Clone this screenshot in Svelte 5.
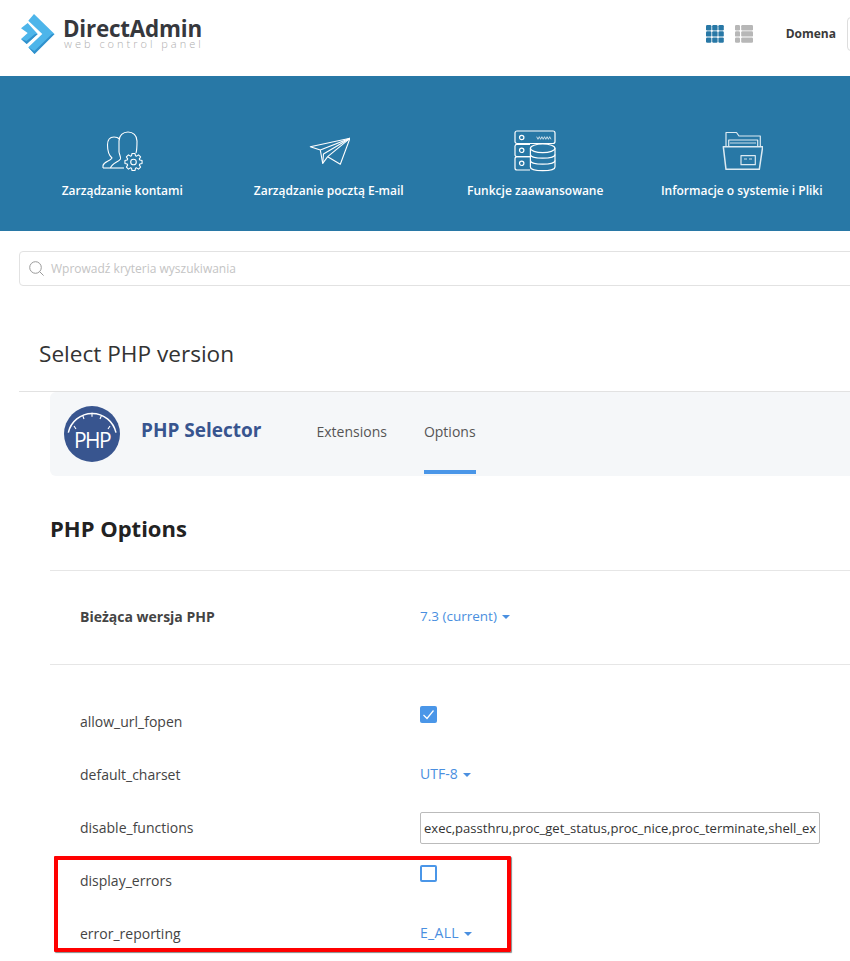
<script>
  let tiles = ["Zarządzanie kontami", "Zarządzanie pocztą E-mail", "Funkcje zaawansowane", "Informacje o systemie i Pliki"];
  let dots = [0, 1, 2];

  // 8 tooth gear outline for the accounts icon
  const gear = (cx, cy, outer, inner) => {
    let pts = [];
    for (let i = 0; i < 8; i++) {
      let a = (i * Math.PI) / 4;
      [[-0.3, inner], [-0.17, outer], [0.17, outer], [0.3, inner]].forEach(([d, r]) => {
        pts.push((cx + r * Math.cos(a + d)).toFixed(2) + " " + (cy + r * Math.sin(a + d)).toFixed(2));
      });
    }
    return "M" + pts.join(" L") + " Z";
  };
</script>

<div class="page">
  <header class="top">
    <div class="logo">
      <svg width="36" height="42" viewBox="0 0 36 42">
        <polygon points="15,1 35.500,21 15.500,41 9.300,34.300 23.300,21 9.300,7.700" fill="#4db5ea" />
        <polygon points="9.300,34.300 15.500,41 35.500,21 33,21 15.300,38" fill="#3291cc" />
        <polygon points="8.700,10 18.700,21 7.700,31 2,26 8.700,20 2,15.300" fill="#4db5ea" />
        <polygon points="2,26 7.700,31 18.700,21 16,21 7.500,28" fill="#3291cc" />
      </svg>
      <div class="logo-text">
        <div class="logo-name">DirectAdmin</div>
        <div class="logo-sub">web control panel</div>
      </div>
    </div>
    <div class="views">
      <svg width="18" height="18" viewBox="0 0 18 18" fill="#2878a6">
        {#each dots as y}
          {#each dots as x}
            <rect x={x * 6.2} y={y * 6.2} width="5.4" height="5.4" rx="1.2" />
          {/each}
        {/each}
      </svg>
      <svg width="18" height="18" viewBox="0 0 18 18" fill="#b7b7b7">
        {#each dots as y}
          <rect x="0" y={y * 6.2} width="5" height="5.4" rx="1.2" />
          <rect x="6.2" y={y * 6.2} width="11.8" height="5.4" rx="1.2" />
        {/each}
      </svg>
    </div>
    <span class="domain-label">Domena</span>
    <div class="domain-box"></div>
  </header>

  <nav class="band">
    {#each tiles as tile, i}
      <div class="tile">
        <div class="tile-icon">
          {#if i === 0}
            <svg width="42" height="42" viewBox="0 0 42 42" fill="none" stroke="#fff" stroke-width="1.100" stroke-linejoin="round">
              <path d="M2 38 V35.500 C3 31.500 9 31.500 11 28 C8 25.500 6.500 22 6.500 15 C6.500 10 9 7 13 7 C15 7 17 7.500 18.500 9" />
              <path d="M2 38 H23" />
              <path d="M9.500 38 C11 33 17 32.500 19.500 29 C20 27 18.500 25 18 22 V11 C18 5.500 22 2 27 2 C32 2 36 5.500 36 11 C36 15 36 20 35 23" />
              <path d={gear(32.500, 32, 8.700, 6.600)} />
              <circle cx="32.500" cy="32" r="2.800" />
            </svg>
          {:else if i === 1}
            <svg width="42" height="42" viewBox="0 0 42 42" fill="none" stroke="#fff" stroke-width="1.100" stroke-linejoin="round">
              <path d="M2.300 16.700 L42 8.300 L32.300 34.300 L19.700 26.700 L14.700 33.300 L12.300 20 Z" />
              <path d="M12.300 20 L42 8.300 L19.700 26.700" />
              <path d="M14.700 33.300 L15.500 24 L42 8.300" />
            </svg>
          {:else if i === 2}
            <svg width="42" height="42" viewBox="0 0 42 42" fill="none" stroke="#fff" stroke-width="1.200">
              <rect x="1" y="1" width="40" height="12.500" rx="2" />
              <path d="M16 26.700 H3 A2 2 0 0 1 1 24.700 V16 A2 2 0 0 1 3 14.300 H16" />
              <path d="M16 26.700 H3 A2 2 0 0 0 1 28.700 V38 A2 2 0 0 0 3 40 H16" />
              <circle cx="7.700" cy="7.500" r="2.200" />
              <circle cx="7.700" cy="20.300" r="2.200" />
              <circle cx="7.700" cy="33.300" r="2.200" />
              <path d="M22.700 6.700 L24 9.300 L25.300 6.700 L26.600 9.300 L27.900 6.700 L29.200 9.300 L30.500 6.700 L31.800 9.300 L33.100 6.700 L34.400 9.300 L35.700 6.700 L37 9.300" stroke-width="0.700" />
              <ellipse cx="28.700" cy="18.300" rx="12.300" ry="4.300" fill="#2878a6" />
              <path d="M16.400 18.300 V37 C16.400 39.300 22 40.700 28.700 40.700 C35.400 40.700 41 39.300 41 37 V18.300" />
              <path d="M16.400 24.500 C16.400 26.800 22 28.200 28.700 28.200 C35.400 28.200 41 26.800 41 24.500" />
              <path d="M16.400 30.500 C16.400 32.800 22 34.200 28.700 34.200 C35.400 34.200 41 32.800 41 30.500" />
            </svg>
          {:else}
            <svg width="42" height="42" viewBox="0 0 42 42" fill="none" stroke="#dceaf2" stroke-width="1.200" stroke-linejoin="round">
              <path d="M5 16 V2.500 H15.500 L18 6 H39.300 V16" />
              <path d="M7.700 16 V10 H36.700 V16" />
              <path d="M9 13 H35" stroke-width="0.900" />
              <path d="M2.300 16.700 H41.700 L38.300 39.300 H5 Z" stroke-width="1.500" />
              <rect x="20" y="25.700" width="14.300" height="9" />
              <path d="M23 29 H26 M28 29 H31" stroke-width="0.900" />
            </svg>
          {/if}
        </div>
        <div class="tile-label">{tile}</div>
      </div>
    {/each}
  </nav>

  <div class="search">
    <svg width="15" height="15" viewBox="0 0 15 15" fill="none" stroke="#9a9a9a" stroke-width="1">
      <circle cx="6.500" cy="6.500" r="5.800" />
      <path d="M10.600 10.600 L14.600 14.600" />
    </svg>
    <span>Wprowadź kryteria wyszukiwania</span>
  </div>

  <h1 class="page-title">Select PHP version</h1>

  <div class="content">
    <div class="plugin-bar">
      <svg class="php-logo" width="56" height="56" viewBox="0 0 56 56">
        <circle cx="28" cy="28" r="28" fill="#38558f" />
        <path d="M4.300 26.700 A24.400 24.400 0 0 1 52 26.700" fill="none" stroke="#fff" stroke-width="1.500" />
        <path d="M10 20 L12 23 M18.700 9.500 L20 13 M28 6.700 V10.700 M37.500 9.500 L36 13 M46 20 L44 23" stroke="#fff" stroke-width="1.100" />
        <text x="28" y="42" text-anchor="middle" class="php-text">PHP</text>
      </svg>
      <div class="plugin-name">PHP Selector</div>
      <div class="tabs">
        <div class="tab">Extensions</div>
        <div class="tab active">Options</div>
      </div>
    </div>

    <h2 class="section">PHP Options</h2>

    <div class="row version">
      <div class="label"><b>Bieżąca wersja PHP</b></div>
      <div class="drop narrow">7.3 (current)<i class="caret"></i></div>
    </div>

    <div class="rows">
      <div class="row">
        <div class="label">allow_url_fopen</div>
        <div class="check on">
          <svg width="17" height="17" viewBox="0 0 17 17" fill="none" stroke="#fff" stroke-width="1.200">
            <path d="M3.500 9 L7 12.500 L13.500 4.500" />
          </svg>
        </div>
      </div>
      <div class="row">
        <div class="label">default_charset</div>
        <div class="drop">UTF-8<i class="caret"></i></div>
      </div>
      <div class="row">
        <div class="label">disable_functions</div>
        <div class="text-input">exec,passthru,proc_get_status,proc_nice,proc_terminate,shell_ex</div>
      </div>
      <div class="row">
        <div class="label">display_errors</div>
        <div class="check"></div>
      </div>
      <div class="row">
        <div class="label">error_reporting</div>
        <div class="drop wide">E_ALL<i class="caret"></i></div>
      </div>
    </div>
    <div class="highlight"></div>
  </div>
</div>

<style>
  :global(body) {
    margin: 0;
    background: #fff;
  }
  .page {
    width: 850px;
    height: 961px;
    overflow: hidden;
    font-family: "Open Sans", "Noto Sans", sans-serif;
    color: #3a3a3a;
  }
  .top {
    display: flex;
    align-items: center;
    height: 76px;
    padding-left: 19px;
    box-sizing: border-box;
  }
  .logo {
    display: flex;
    align-items: center;
    gap: 8px;
    margin-right: auto;
    margin-top: -9px;
  }
  .logo-name {
    font-size: 22.4px;
    line-height: 18px;
    font-weight: 700;
    color: #36383d;
    letter-spacing: -0.2px;
  }
  .logo-sub {
    font-size: 11px;
    line-height: 9px;
    color: #aeaeae;
    letter-spacing: 3px;
    margin-top: 1px;
    padding-left: 1px;
    font-weight: 300;
  }
  .views {
    display: flex;
    gap: 11px;
    margin-right: 33px;
    margin-top: -9px;
  }
  .domain-label {
    font-size: 12px;
    font-weight: 700;
    color: #3a3a3a;
    margin-right: 11px;
    margin-top: -9px;
  }
  .domain-box {
    width: 40px;
    height: 34px;
    margin-right: -37px;
    margin-top: -9px;
    border: 1px solid #ddd;
    border-radius: 4px;
    flex: none;
    box-sizing: border-box;
  }
  .band {
    display: grid;
    grid-template-columns: repeat(4, 206.5px);
    height: 155px;
    background: #2878a6;
    padding-left: 19px;
    box-sizing: border-box;
    color: #fff;
    text-align: center;
  }
  .tile-icon {
    height: 42px;
    margin-top: 54px;
  }
  .tile-label {
    margin-top: 10px;
    font-size: 12px;
    font-weight: 600;
    line-height: 18px;
    white-space: nowrap;
  }
  .search {
    display: flex;
    align-items: center;
    gap: 7px;
    width: 900px;
    height: 35px;
    margin: 20px 0 0 19px;
    padding-left: 9px;
    box-sizing: border-box;
    border: 1px solid #e2e2e2;
    border-radius: 4px;
    font-size: 12px;
    color: #c4c4c4;
  }
  .page-title {
    margin: 0 0 0 19px;
    padding: 50px 0 20px 20px;
    font-size: 22.6px;
    font-weight: 400;
    line-height: 35px;
    color: #333;
    border-bottom: 1px solid #e2e2e2;
    width: 900px;
  }
  .content {
    position: relative;
    padding-left: 50px;
  }
  .plugin-bar {
    display: flex;
    align-items: center;
    width: 900px;
    height: 84px;
    background: #f5f7f9;
    border-radius: 6px;
    padding-left: 14px;
    box-sizing: border-box;
  }
  .php-text {
    font-size: 21px;
    fill: #fff;
    font-family: "Open Sans", sans-serif;
    letter-spacing: -1.5px;
  }
  .plugin-name {
    margin-left: 21px;
    margin-bottom: 8px;
    font-size: 19px;
    font-weight: 700;
    color: #38558f;
  }
  .tabs {
    display: flex;
    align-self: flex-start;
    gap: 37px;
    margin-left: 55px;
  }
  .tab {
    display: flex;
    align-items: center;
    height: 82px;
    box-sizing: border-box;
    border-bottom: 4px solid transparent;
    font-size: 14px;
    color: #555;
  }
  .tab.active {
    border-bottom-color: #4a96e8;
  }
  .section {
    margin: 0;
    padding: 37px 0 27px;
    font-size: 22px;
    line-height: 30px;
    font-weight: 700;
    color: #222;
    border-bottom: 1px solid #e6e6e6;
    width: 900px;
  }
  .row {
    display: flex;
    align-items: center;
    height: 53px;
    padding-left: 30px;
  }
  .version {
    box-sizing: border-box;
    height: 94px;
    padding-bottom: 2px;
    border-bottom: 1px solid #e6e6e6;
    width: 900px;
  }
  .rows {
    padding-top: 30px;
  }
  .label {
    width: 340px;
    font-size: 14px;
    color: #444;
    flex: none;
  }
  .label b {
    font-weight: 700;
  }
  .drop {
    font-size: 14px;
    color: #4a8fe0;
    margin-bottom: 2px;
  }
  .drop.narrow {
    font-size: 13.5px;
  }
  .drop.wide {
    letter-spacing: 0.3px;
  }
  .caret {
    display: inline-block;
    margin-left: 5px;
    vertical-align: middle;
    border-top: 4px solid #4a8fe0;
    border-left: 4px solid transparent;
    border-right: 4px solid transparent;
  }
  .check {
    width: 17px;
    height: 17px;
    box-sizing: border-box;
    border: 2px solid #4a96e8;
    border-radius: 2px;
    margin-top: -15px;
  }
  .check.on {
    background: #4a96e8;
    border: none;
  }
  .check svg {
    display: block;
  }
  .text-input {
    width: 400px;
    height: 32px;
    box-sizing: border-box;
    border: 1px solid #bbb;
    border-radius: 2px;
    padding: 0 3px;
    font-size: 13.05px;
    line-height: 30px;
    color: #333;
    white-space: nowrap;
    overflow: hidden;
  }
  .highlight {
    position: absolute;
    left: 54px;
    top: 464px;
    width: 457px;
    height: 96px;
    box-sizing: border-box;
    border: 4px solid #f00;
    border-radius: 1px;
    box-shadow: 1px 1px 1px #888;
  }
</style>
